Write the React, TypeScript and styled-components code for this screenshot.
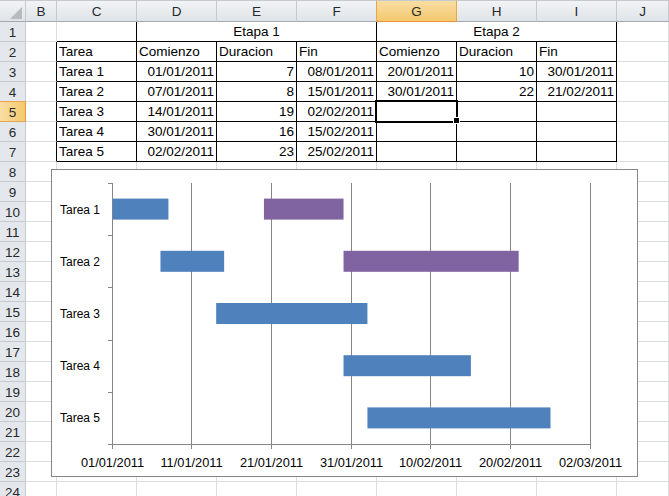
import React from "react";
import styled, { createGlobalStyle } from "styled-components";

const GlobalStyle = createGlobalStyle`
  html, body {
    margin: 0;
    padding: 0;
    background: #fff;
    overflow: hidden;
  }
  body {
    font-family: "Liberation Sans", Arial, sans-serif;
  }
`;

const GRID = "#DADCDD";
const INK = "#000";
const HEAD_LINE = "#C5CAD0";
const SEL_LINE = "#E8A64B";

const LETTERS = ["B", "C", "D", "E", "F", "G", "H", "I", "J"];
const SEL_COL = 5; // G
const SEL_ROW = 5;

type Align = "left" | "right" | "center";

// contents of rows 2..7, columns C..I
const TABLE: string[][] = [
  ["Tarea", "Comienzo", "Duracion", "Fin", "Comienzo", "Duracion", "Fin"],
  ["Tarea 1", "01/01/2011", "7", "08/01/2011", "20/01/2011", "10", "30/01/2011"],
  ["Tarea 2", "07/01/2011", "8", "15/01/2011", "30/01/2011", "22", "21/02/2011"],
  ["Tarea 3", "14/01/2011", "19", "02/02/2011", "", "", ""],
  ["Tarea 4", "30/01/2011", "16", "15/02/2011", "", "", ""],
  ["Tarea 5", "02/02/2011", "23", "25/02/2011", "", "", ""],
];

const Sheet = styled.div`
  position: relative;
  width: 669px;
  height: 496px;
  overflow: hidden;
  display: grid;
  grid-template-columns: 26px 31px repeat(7, 80px) 52px;
  grid-template-rows: 22px repeat(24, 20px);
  font-family: "Liberation Sans", Arial, sans-serif;
`;

const Corner = styled.div`
  box-sizing: border-box;
  border-top: 1px solid ${HEAD_LINE};
  border-right: 1px solid ${HEAD_LINE};
  border-bottom: 1px solid #A3A9B0;
  background: linear-gradient(#F1F3F5, #E0E4E8);
  display: flex;
  align-items: flex-end;
  justify-content: flex-end;
  padding: 0 3px 2px 0;
`;

const ColHead = styled.div<{ $sel?: boolean; $prevSel?: boolean }>`
  box-sizing: border-box;
  border-top: 1px solid ${HEAD_LINE};
  border-right: 1px solid ${(p) => (p.$sel || p.$prevSel ? SEL_LINE : HEAD_LINE)};
  border-bottom: 1px solid ${(p) => (p.$sel ? "#F29436" : "#A3A9B0")};
  background: ${(p) =>
    p.$sel
      ? "linear-gradient(#F9DDA3, #F4C96F)"
      : "linear-gradient(#F1F3F5, #E0E4E8)"};
  display: flex;
  align-items: center;
  justify-content: center;
  padding-top: 1px;
  font-size: 13.5px;
  color: #27292C;
`;

const RowHead = styled.div<{ $sel?: boolean; $prevSel?: boolean }>`
  box-sizing: border-box;
  border-right: 1px solid ${(p) => (p.$sel ? "#F29436" : HEAD_LINE)};
  border-bottom: 1px solid ${(p) => (p.$sel || p.$prevSel ? SEL_LINE : HEAD_LINE)};
  background: ${(p) =>
    p.$sel ? "linear-gradient(90deg, #F9DDA3, #F4C96F)" : "#E4E7EB"};
  display: flex;
  align-items: center;
  justify-content: center;
  padding-top: 1px;
  font-size: 13.5px;
  color: #27292C;
`;

const Cell = styled.div<{ $right: string; $bottom: string; $align: Align; $span?: number }>`
  box-sizing: border-box;
  grid-column: span ${(p) => p.$span ?? 1};
  border-right: 1px solid ${(p) => p.$right};
  border-bottom: 1px solid ${(p) => p.$bottom};
  display: flex;
  align-items: flex-end;
  justify-content: ${(p) =>
    p.$align === "right" ? "flex-end" : p.$align === "center" ? "center" : "flex-start"};
  padding: 0 2px 1px 2px;
  font-size: 13.5px;
  line-height: 16px;
  color: #000;
  white-space: nowrap;
  overflow: hidden;
`;

const ActiveCell = styled.div`
  position: absolute;
  left: 375px;
  top: 100px;
  width: 83px;
  height: 23px;
  box-sizing: border-box;
  border: 2px solid #000;
  box-shadow: inset 0 0 0 1px #fff;
  pointer-events: none;
`;

const FillHandle = styled.div`
  position: absolute;
  left: 453px;
  top: 117px;
  width: 7px;
  height: 7px;
  box-sizing: border-box;
  border: 1px solid #fff;
  background: #000;
`;

const ChartBox = styled.div`
  position: absolute;
  left: 51px;
  top: 169px;
  width: 587px;
  height: 308px;
  box-sizing: border-box;
  border: 1px solid #868686;
  background: #fff;
`;

const ChartSvg = styled.svg`
  display: block;
  & text {
    font-family: "Liberation Sans", Arial, sans-serif;
    fill: #000;
  }
  & .cat {
    font-size: 12px;
  }
  & .date {
    font-size: 12.8px;
  }
`;

const TICKS = [112, 191, 271, 351, 430, 510, 590];
const DATES = [
  "01/01/2011",
  "11/01/2011",
  "21/01/2011",
  "31/01/2011",
  "10/02/2011",
  "20/02/2011",
  "02/03/2011",
];
const PLOT_TOP = 183;
const PLOT_BOTTOM = 444;
const CAT_H = (PLOT_BOTTOM - PLOT_TOP) / 5;
const dayX = (d: number) => 112.7 + (d * (590.3 - 112.7)) / 60;

const TASKS = [
  { name: "Tarea 1", a: [0, 7], b: [19, 10] },
  { name: "Tarea 2", a: [6, 8], b: [29, 22] },
  { name: "Tarea 3", a: [13, 19] },
  { name: "Tarea 4", a: [29, 16] },
  { name: "Tarea 5", a: [32, 23] },
];

function GanttChart() {
  const line = "#868686";
  return (
    <ChartBox>
      <ChartSvg width={585} height={306} viewBox="52 170 585 306">
        {TICKS.slice(1).map((x) => (
          <line key={x} x1={x + 0.5} x2={x + 0.5} y1={PLOT_TOP} y2={PLOT_BOTTOM} stroke={line} />
        ))}
        <line x1={112.5} x2={112.5} y1={PLOT_TOP} y2={PLOT_BOTTOM + 0.5} stroke={line} />
        <line x1={112} x2={591} y1={PLOT_BOTTOM + 0.5} y2={PLOT_BOTTOM + 0.5} stroke={line} />
        {[0, 1, 2, 3, 4, 5].map((i) => {
          const y = Math.round(PLOT_TOP + i * CAT_H) + 0.5;
          return <line key={i} x1={108} x2={113} y1={y} y2={y} stroke={line} />;
        })}
        {TICKS.map((x) => (
          <line key={x} x1={x + 0.5} x2={x + 0.5} y1={PLOT_BOTTOM} y2={PLOT_BOTTOM + 5} stroke={line} />
        ))}
        {TASKS.map((t, i) => {
          const cy = PLOT_TOP + (i + 0.5) * CAT_H;
          return (
            <g key={t.name}>
              <rect
                x={dayX(t.a[0])}
                y={cy - 10.5}
                width={dayX(t.a[0] + t.a[1]) - dayX(t.a[0])}
                height={21}
                fill="#4F81BD"
              />
              {t.b && (
                <rect
                  x={dayX(t.b[0])}
                  y={cy - 10.5}
                  width={dayX(t.b[0] + t.b[1]) - dayX(t.b[0])}
                  height={21}
                  fill="#8064A2"
                />
              )}
              <text className="cat" x={60} y={cy + 4.5}>
                {t.name}
              </text>
            </g>
          );
        })}
        {TICKS.map((x, i) => (
          <text key={x} className="date" x={x + 0.5} y={466.5} textAnchor="middle">
            {DATES[i]}
          </text>
        ))}
      </ChartSvg>
    </ChartBox>
  );
}

function borderFor(row: number, col: number) {
  // col: 0 = B ... 8 = J
  const inTable = col >= 1 && col <= 7;
  let right = GRID;
  let bottom = GRID;
  if (row >= 1 && row <= 7 && inTable) bottom = INK;
  if (row >= 2 && row <= 7 && col <= 7) right = INK;
  if (row === 1 && (col === 1 || col === 4 || col === 7)) right = INK;
  return { right, bottom };
}

function SheetRow({ row }: { row: number }) {
  const cells: React.ReactNode[] = [];
  cells.push(
    <RowHead key="h" $sel={row === SEL_ROW} $prevSel={row === SEL_ROW - 1}>
      {row}
    </RowHead>
  );
  if (row === 1) {
    const b0 = borderFor(1, 0);
    const b1 = borderFor(1, 1);
    cells.push(<Cell key="b" $right={b0.right} $bottom={b0.bottom} $align="left" />);
    cells.push(<Cell key="c" $right={b1.right} $bottom={b1.bottom} $align="left" />);
    cells.push(
      <Cell key="d" $span={3} $right={INK} $bottom={INK} $align="center">
        Etapa 1
      </Cell>
    );
    cells.push(
      <Cell key="g" $span={3} $right={INK} $bottom={INK} $align="center">
        Etapa 2
      </Cell>
    );
    const b8 = borderFor(1, 8);
    cells.push(<Cell key="j" $right={b8.right} $bottom={b8.bottom} $align="left" />);
    return <>{cells}</>;
  }
  for (let col = 0; col < 9; col++) {
    const { right, bottom } = borderFor(row, col);
    const text = row >= 2 && row <= 7 && col >= 1 && col <= 7 ? TABLE[row - 2][col - 1] : "";
    const numeric = row >= 3 && /^[0-9/]+$/.test(text);
    cells.push(
      <Cell key={col} $right={right} $bottom={bottom} $align={numeric ? "right" : "left"}>
        {text}
      </Cell>
    );
  }
  return <>{cells}</>;
}

export default function App() {
  const rows = Array.from({ length: 24 }, (_, i) => i + 1);
  return (
    <>
      <GlobalStyle />
      <Sheet>
        <Corner>
          <svg width="12" height="12" viewBox="0 0 12 12">
            <polygon points="0,12 12,12 12,0" fill="#B7BBC0" />
          </svg>
        </Corner>
        {LETTERS.map((l, i) => (
          <ColHead key={l} $sel={i === SEL_COL} $prevSel={i === SEL_COL - 1}>
            {l}
          </ColHead>
        ))}
        {rows.map((r) => (
          <SheetRow key={r} row={r} />
        ))}
        <ActiveCell />
        <FillHandle />
        <GanttChart />
      </Sheet>
    </>
  );
}
